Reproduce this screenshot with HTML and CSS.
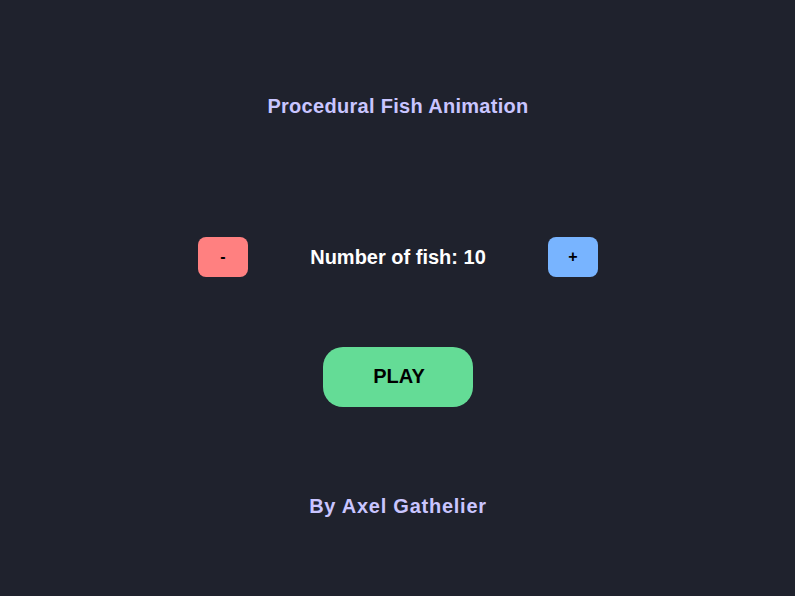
FILE: index.html
```html
<!DOCTYPE html>
<html>
<head>
<meta charset="utf-8">
<link rel="stylesheet" href="styles.css">
</head>
<body>
<main class="screen">
  <h1 class="title">Procedural Fish Animation</h1>
  <div class="counter">
    <button class="btn btn-minus">-</button>
    <span class="count">Number of fish: 10</span>
    <button class="btn btn-plus">+</button>
  </div>
  <button class="play">PLAY</button>
  <p class="credit">By Axel Gathelier</p>
</main>
</body>
</html>
```
FILE: styles.css
```css
html, body {
  margin: 0;
  padding: 0;
  background: #1f222d;
}
.screen {
  width: 796px;
  height: 596px;
  display: flex;
  flex-direction: column;
  align-items: center;
  padding-top: 94px;
  box-sizing: border-box;
  font-family: "Liberation Sans", Arial, sans-serif;
  font-weight: bold;
}
.title {
  margin: 0;
  font-size: 20px;
  line-height: 24px;
  color: #c9c5ff;
  font-weight: bold;
  letter-spacing: 0.3px;
}
.counter {
  margin-top: 119px;
  width: 400px;
  height: 40px;
  display: flex;
  align-items: center;
  justify-content: space-between;
}
.btn {
  width: 50px;
  height: 40px;
  border: none;
  border-radius: 8px;
  font-family: inherit;
  font-weight: bold;
  font-size: 16px;
  color: #000;
  padding: 0;
}
.btn-minus { background: #ff8080; }
.btn-plus { background: #78b4ff; }
.count {
  color: #ffffff;
  font-size: 20px;
  line-height: 24px;
  margin-top: -1px;
}
.play {
  margin-top: 70px;
  width: 150px;
  height: 60px;
  border: none;
  border-radius: 20px;
  background: #64dc96;
  color: #000;
  font-family: inherit;
  font-weight: bold;
  font-size: 20px;
  padding: 0 0 2px 2px;
}
.credit {
  margin: 87px 0 0;
  font-size: 20px;
  line-height: 24px;
  color: #c9c5ff;
  letter-spacing: 0.75px;
}
```
